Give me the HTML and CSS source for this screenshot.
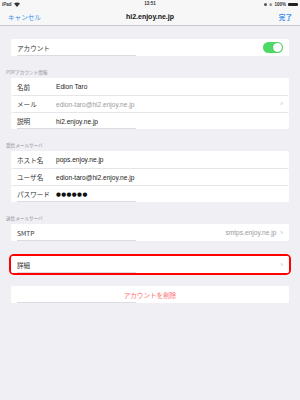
FILE: index.html
```html
<!DOCTYPE html>
<html lang="ja">
<head>
<meta charset="utf-8">
<link rel="stylesheet" href="styles.css">
</head>
<body>
<div class="screen">
  <div class="status">
    <div class="st-left">iPad <svg class="wifi" width="6" height="5" viewBox="0 0 6 5"><path d="M0 1.6 Q3 -0.6 6 1.6 L3 5 Z" fill="#333"/></svg></div>
    <div class="st-mid">13:51</div>
    <div class="st-right"><span class="dot"></span><span class="bt">&#10033;</span>100% <span class="battery"></span></div>
  </div>
  <div class="nav">
    <span class="nav-l">キャンセル</span>
    <span class="nav-t">hi2.enjoy.ne.jp</span>
    <span class="nav-r">完了</span>
  </div>
  <div class="content">
    <div class="card first">
      <div class="row"><span class="lab">アカウント</span><span class="toggle"><span class="knob"></span></span></div>
    </div>

    <div class="sec">POPアカウント情報</div>
    <div class="card">
      <div class="row"><span class="lab">名前</span><span class="val">Edion Taro</span></div>
      <div class="row"><span class="lab">メール</span><span class="val grey">edion-taro@hi2.enjoy.ne.jp</span><span class="chev">&#x203A;</span></div>
      <div class="row"><span class="lab">説明</span><span class="val">hi2.enjoy.ne.jp</span></div>
    </div>

    <div class="sec">受信メールサーバ</div>
    <div class="card">
      <div class="row"><span class="lab">ホスト名</span><span class="val">pops.enjoy.ne.jp</span></div>
      <div class="row"><span class="lab">ユーザ名</span><span class="val">edion-taro@hi2.enjoy.ne.jp</span></div>
      <div class="row"><span class="lab">パスワード</span><span class="val dots">●●●●●●</span></div>
    </div>

    <div class="sec">送信メールサーバ</div>
    <div class="card">
      <div class="row"><span class="lab">SMTP</span><span class="right grey">smtps.enjoy.ne.jp</span><span class="chev">&#x203A;</span></div>
    </div>

    <div class="card hl">
      <div class="row"><span class="lab">詳細</span><span class="right"></span><span class="chev">&#x203A;</span></div>
    </div>

    <div class="card del">
      <div class="row center"><span class="delete">アカウントを削除</span></div>
    </div>
  </div>
</div>
</body>
</html>
```

FILE: styles.css
```css
html, body {
  margin: 0;
  padding: 0;
  background: #efeff4;
}
.screen {
  width: 300px;
  height: 400px;
  background: #efeff4;
  font-family: "Noto Sans CJK JP", "Liberation Sans", sans-serif;
  color: #222;
  overflow: hidden;
}
.status {
  height: 8px;
  background: #f7f7f7;
  display: flex;
  align-items: center;
  justify-content: space-between;
  padding: 0 2px;
  font-family: "Liberation Sans", sans-serif;
  font-size: 4.5px;
  font-weight: bold;
  color: #333;
  position: relative;
}
.st-left { display: flex; align-items: center; gap: 2px; }
.st-mid { position: absolute; left: 0; right: 0; text-align: center; top: 1px; }
.st-right { display: flex; align-items: center; gap: 2px; }
.dot { width: 3px; height: 3px; border-radius: 50%; background: #555; }
.bt { font-size: 4px; color: #888; }
.battery { width: 10px; height: 3px; background: #222; border-radius: 1px; }
.nav {
  height: 17px;
  background: #f7f7f7;
  border-bottom: 1px solid #c8c7cc;
  display: flex;
  align-items: center;
  justify-content: space-between;
  padding: 0 8px;
  font-size: 6.6px;
}
.nav-l { color: #3b8ff0; width: 40px; }
.nav-t { font-family: "Liberation Sans", sans-serif; font-weight: bold; font-size: 7px; color: #111; }
.nav-r { color: #3b8ff0; font-weight: bold; width: 40px; text-align: right; }
.content {
  padding: 0 11px;
}
.card {
  background: #fff;
  border-radius: 2px;
  position: relative;
  display: flex;
  flex-direction: column;
}
.card::after {
  content: "";
  position: absolute;
  left: 6px;
  width: 119px;
  bottom: 0;
  height: 1px;
  background: #dcdce0;
}
.card.first { margin-top: 13px; }
.card .row + .row { border-top: 1px solid #e6e6ea; }
.row {
  height: 17px;
  box-sizing: border-box;
  display: flex;
  align-items: center;
  padding: 0 6px;
  font-size: 6.6px;
  background: #fff;
  border-radius: 2px;
}
.lab { width: 39px; color: #333; flex-shrink: 0; }
.val { flex: 1; font-family: "Liberation Sans", sans-serif; color: #222; }
.right { flex: 1; text-align: right; font-family: "Liberation Sans", sans-serif; padding-right: 4px; }
.grey { color: #9a9a9e; }
.dots { font-size: 5.6px; letter-spacing: 0.4px; color: #111; font-family: "DejaVu Sans", sans-serif; }
.chev { color: #c7c7cc; font-size: 8px; line-height: 1; font-family: "Liberation Sans", sans-serif; }
.toggle {
  margin-left: auto;
  width: 20px;
  height: 11px;
  border-radius: 6px;
  background: #4cd964;
  display: flex;
  align-items: center;
  justify-content: flex-end;
  padding: 0 1px;
  box-sizing: border-box;
}
.knob {
  width: 9px;
  height: 9px;
  border-radius: 50%;
  background: #fff;
  box-shadow: 0 0 1px rgba(0,0,0,0.3);
}
.sec {
  padding: 13px 0 0 0;
  margin-left: -5px;
  height: 9px;
  font-size: 4.6px;
  color: #8e8e93;
  line-height: 7px;
}
.hl {
  margin-top: 15px;
  box-shadow: 0 0 0 2px #f00;
  border-radius: 3px;
}
.del { margin-top: 13px; }
.center { justify-content: center; }
.delete { color: #ff6b6b; font-size: 6.6px; }
```
